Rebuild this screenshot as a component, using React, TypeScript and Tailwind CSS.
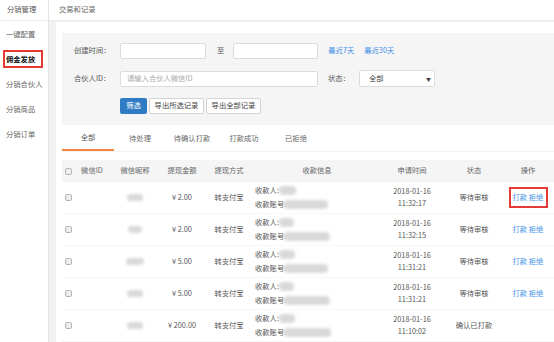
const rows = [
  { id: 1, amount: "¥ 2.00", time: "11:32:17", status: "等待审核", actions: true, nick: 16, payee: 17, account: 44 },
  { id: 2, amount: "¥ 2.00", time: "11:32:15", status: "等待审核", actions: true, nick: 14, payee: 15, account: 46 },
  { id: 3, amount: "¥ 5.00", time: "11:31:21", status: "等待审核", actions: true, nick: 18, payee: 16, account: 44 },
  { id: 4, amount: "¥ 5.00", time: "11:31:21", status: "等待审核", actions: true, nick: 16, payee: 15, account: 46 },
  { id: 5, amount: "¥ 200.00", time: "11:10:02", status: "确认已打款", actions: false, nick: 16, payee: 16, account: 47 },
];

const menu = ["一键配置", "佣金发放", "分销合伙人", "分销商品", "分销订单"];
const tabs = ["全部", "待处理", "待确认打款", "打款成功", "已拒绝"];
const cols = "grid grid-cols-[12px_36px_50px_44px_50px_126px_64px_60px_48px]";

const Checkbox = () => (
  <div className="w-[7px] h-[7px] rounded-[2px] border border-[#b5b5b5] bg-[#eeeeee]" />
);

const Blob = ({ w, h = 7 }: { w: number; h?: number }) => (
  <div className="bg-[#d9d9d9] rounded-[4px] blur-[1.5px]" style={{ width: w, height: h }} />
);

export default function App() {
  return (
    <div className="w-[554px] h-[342px] overflow-hidden bg-white flex font-['Noto_Sans_CJK_SC',sans-serif] text-[7.3px] leading-none text-[#555]">
      {/* sidebar */}
      <div className="w-[49px] shrink-0 border-r border-[#e4e4e4] flex flex-col">
        <div className="h-[21px] border-b border-[#ececec] flex items-center pl-[7px] text-[#555]">分销管理</div>
        <div className="pt-[1px]">
          {menu.map((m, i) => (
            <div key={m} className="relative h-[25px] flex items-center pl-[6px]">
              <span className={i === 1 ? "font-bold text-[#111]" : "text-[#666]"}>{m}</span>
              {i === 1 && (
                <div className="absolute left-[3px] top-[3px] w-[40px] h-[18px] border-2 border-[#e53935]" />
              )}
            </div>
          ))}
        </div>
      </div>

      {/* main */}
      <div className="flex-1 flex flex-col">
        <div className="h-[21px] border-b border-[#ececec] flex items-center pl-[10px] text-[#666]">交易和记录</div>
        <div className="flex-1 bg-[#f2f2f2] pl-[7px] pt-[1px] flex">
          <div className="flex-1 bg-white pl-[6px] pt-[11px]">
            {/* filters */}
            <div className="h-[92px] bg-[#f5f5f5] pl-[12px] pt-[10px]">
              <div className="flex items-center h-[16px]">
                <span className="w-[46px]">创建时间：</span>
                <div className="w-[86px] h-[16px] bg-white border border-[#dcdcdc] rounded-[2px]" />
                <span className="ml-[11px]">至</span>
                <div className="ml-[9px] w-[85px] h-[16px] bg-white border border-[#dcdcdc] rounded-[2px]" />
                <span className="ml-[10px] text-[#3c8ee8]">最近7天</span>
                <span className="ml-[10px] text-[#3c8ee8]">最近30天</span>
              </div>
              <div className="flex items-center h-[17px] mt-[11px]">
                <span className="w-[46px]">合伙人ID：</span>
                <div className="w-[198px] h-[16px] bg-white border border-[#dcdcdc] rounded-[2px] flex items-center pl-[6px] text-[#aaa]">
                  请输入合伙人微信ID
                </div>
                <span className="ml-[10px]">状态：</span>
                <div className="ml-[9px] w-[76px] h-[17px] bg-white border border-[#dcdcdc] rounded-[2px] flex items-center justify-between pl-[9px] pr-[3px] text-[#444]">
                  <span>全部</span>
                  <span className="text-[5px]">▼</span>
                </div>
              </div>
              <div className="flex items-center gap-[2px] ml-[46px] mt-[11px]">
                <div className="w-[27px] h-[16px] bg-[#2f7cc4] rounded-[2px] text-white flex items-center justify-center">筛选</div>
                <div className="w-[55px] h-[16px] bg-white border border-[#d4d4d4] rounded-[2px] flex items-center justify-center text-[#444]">导出所选记录</div>
                <div className="w-[55px] h-[16px] bg-white border border-[#d4d4d4] rounded-[2px] flex items-center justify-center text-[#444]">导出全部记录</div>
              </div>
            </div>

            {/* tabs */}
            <div className="h-[27px] flex border-b border-[#f3f3f3]">
              {tabs.map((t, i) => (
                <div
                  key={t}
                  className={
                    i === 0
                      ? "w-[52px] flex items-center justify-center pt-[1px] border-b-2 border-[#f5853f] text-[#555]"
                      : "w-[52px] flex items-center justify-center pt-[1px] text-[#666]"
                  }
                >
                  {t}
                </div>
              ))}
            </div>

            {/* table */}
            <div className="mt-[8px]">
              <div className={`${cols} h-[22px] bg-[#f5f5f5] items-center text-center text-[#666]`}>
                <div className="flex justify-center"><Checkbox /></div>
                <div>微信ID</div>
                <div>微信昵称</div>
                <div>提现金额</div>
                <div>提现方式</div>
                <div>收款信息</div>
                <div>申请时间</div>
                <div>状态</div>
                <div>操作</div>
              </div>
              {rows.map((r) => (
                <div key={r.id} className={`${cols} h-[32px] items-center text-center border-b border-[#f6f6f6]`}>
                  <div className="flex justify-center"><Checkbox /></div>
                  <div />
                  <div className="flex justify-center"><Blob w={r.nick} h={7} /></div>
                  <div>{r.amount}</div>
                  <div>转支付宝</div>
                  <div className="flex flex-col gap-[5px] pl-[1px] text-left">
                    <div className="flex items-center">
                      <span>收款人:</span>
                      <Blob w={r.payee} h={9} />
                    </div>
                    <div className="flex items-center">
                      <span>收款账号:</span>
                      <div className="-ml-[2px]"><Blob w={r.account} h={9} /></div>
                    </div>
                  </div>
                  <div className="flex flex-col gap-[5px] items-center">
                    <span>2018-01-16</span>
                    <span>{r.time}</span>
                  </div>
                  <div>{r.status}</div>
                  <div className="relative h-full flex items-center justify-center">
                    {r.actions && <span className="text-[#3c8ee8]">打款 拒绝</span>}
                    {r.id === 1 && (
                      <div className="absolute left-[5px] top-[5px] w-[39px] h-[21px] border-2 border-[#e53935]" />
                    )}
                  </div>
                </div>
              ))}
            </div>
          </div>
        </div>
      </div>
    </div>
  );
}
